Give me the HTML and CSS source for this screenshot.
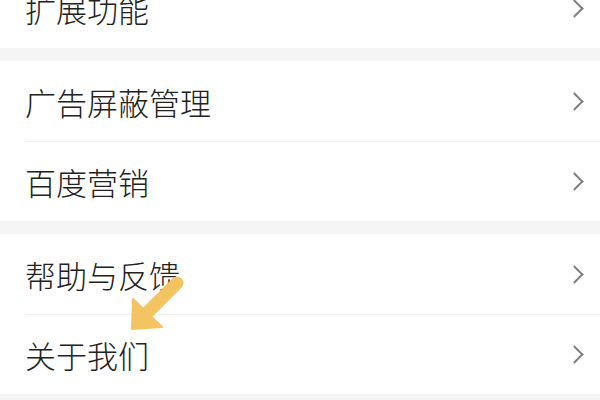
FILE: index.html
```html
<!DOCTYPE html>
<html lang="zh-CN">
<head>
  <meta charset="UTF-8">
  <meta name="viewport" content="width=device-width, initial-scale=1.0">
  <title>设置</title>
  <link rel="stylesheet" href="styles.css">
</head>
<body>
  <div class="settings">
    <div class="group">
      <div class="row"><span class="label">扩展功能</span><span class="chevron"></span></div>
    </div>
    <div class="group">
      <div class="row"><span class="label">广告屏蔽管理</span><span class="chevron"></span></div>
      <div class="row"><span class="label">百度营销</span><span class="chevron"></span></div>
    </div>
    <div class="group">
      <div class="row"><span class="label">帮助与反馈</span><span class="chevron"></span></div>
      <div class="row"><span class="label">关于我们</span><span class="chevron"></span></div>
    </div>
  </div>

  <!-- 标注箭头 -->
  <svg class="pointer" width="600" height="400" viewBox="0 0 600 400">
    <line x1="177" y1="283" x2="146" y2="314" stroke="#f4c462" stroke-width="13" stroke-linecap="round"/>
    <polygon points="132,329 133,299 162,327" fill="#f4c462" stroke="#f4c462" stroke-width="2" stroke-linejoin="round"/>
  </svg>
</body>
</html>
```

FILE: styles.css
```css
body {
  margin: 0;
  background-color: #f5f5f5;
  font-family: "Noto Sans CJK SC", "Noto Sans", sans-serif;
  overflow: hidden;
}
.settings {
  margin-top: -32px;
  display: flex;
  flex-direction: column;
  gap: 13px;
}
.group {
  background: #fff;
}
.row {
  height: 80px;
  margin-left: 25px;
  padding-right: 19px;
  display: flex;
  align-items: center;
  justify-content: space-between;
  box-sizing: border-box;
}
.row + .row {
  border-top: 1px solid #f0f0f0;
}
.label {
  font-size: 31px;
  font-weight: 300;
  color: #222;
  line-height: 1;
}
.chevron {
  width: 11px;
  height: 11px;
  border-top: 2px solid #808080;
  border-right: 2px solid #808080;
  transform: rotate(45deg);
}
.pointer {
  position: absolute;
  left: 0;
  top: 0;
  pointer-events: none;
}
```
